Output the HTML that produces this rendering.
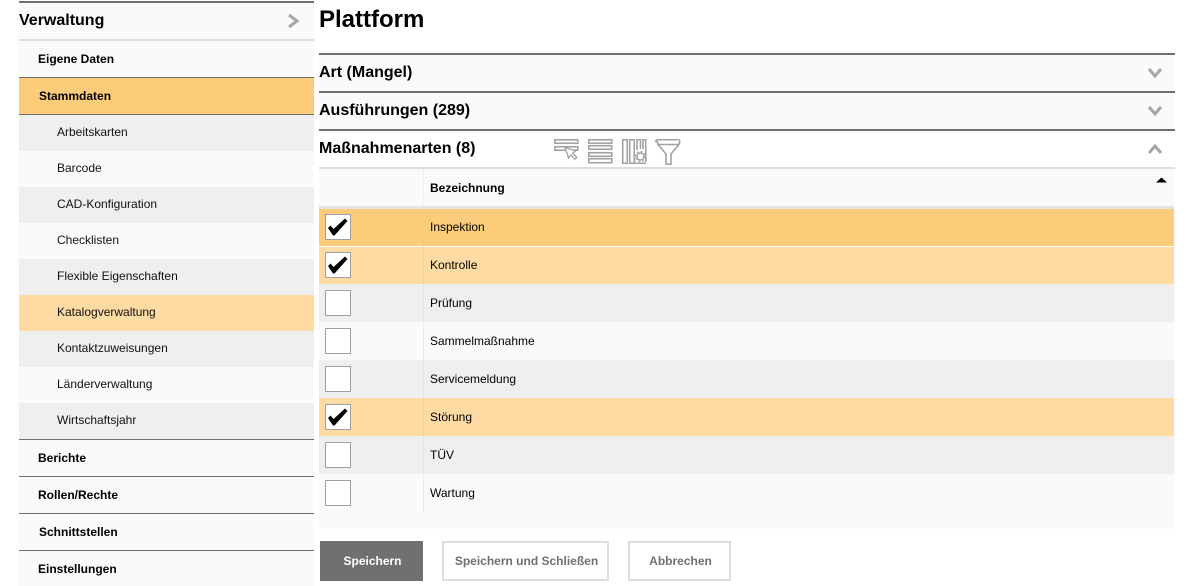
<!DOCTYPE html>
<html><head><meta charset="utf-8">
<style>
html,body{margin:0;padding:0;background:#fff;width:1195px;height:586px;overflow:hidden}
body{font-family:"Liberation Sans",sans-serif;color:#000;position:relative}
.a{position:absolute;white-space:nowrap}
.s{left:19px;width:295px}
.t{line-height:36px;height:36px;font-size:12px}
.u{line-height:34px;color:#111}
.b{font-weight:bold}
.g{background:#efefef}.w{background:#fafafa}
.r{left:319px;width:855px;height:37px}
.r span{position:absolute;left:111px;top:0;line-height:36px;font-size:12px}
.r i{position:absolute;left:104px;top:0;bottom:-1px;width:1px;background:rgba(200,200,200,.3)}
.x{box-shadow:0 -1px 0 var(--c)}
.c{position:absolute;left:6px;top:5px;width:24px;height:24px;border:1px solid #a0a0a0;background:#fff}
.c svg{position:absolute;left:0;top:0}
.btn{top:541px;height:40px;box-sizing:border-box;text-align:center;font-size:12px;font-weight:bold;line-height:40px;padding-left:2px}
</style></head><body>
<!-- sidebar -->
<div class="a s w" style="top:1px;height:38px;border-top:2px solid #707070;box-sizing:border-box"></div>
<div class="a" style="left:19px;top:3px;line-height:36px;font-size:16px;font-weight:bold">Verwaltung</div>
<svg class="a" style="left:287px;top:13px" width="13" height="16" viewBox="0 0 13 16"><path d="M2 2l8 6-8 6" fill="none" stroke="#a5a5a5" stroke-width="3"/></svg>
<div class="a s" style="top:39px;height:2px;background:#ddd"></div>
<div class="a s w t b" style="top:41px;text-indent:19px">Eigene Daten</div>
<div class="a s" style="top:77px;height:1px;background:#707070"></div>
<div class="a s t b" style="top:78px;background:#fdcc7a;text-indent:20px">Stammdaten</div>
<div class="a s" style="top:114px;height:1px;background:#707070"></div>
<div class="a s g t u" style="top:115px;text-indent:38px">Arbeitskarten</div>
<div class="a s w t u" style="top:151px;text-indent:38px">Barcode</div>
<div class="a s g t u" style="top:187px;text-indent:38px">CAD-Konfiguration</div>
<div class="a s w t u" style="top:223px;text-indent:38px">Checklisten</div>
<div class="a s g t u" style="top:259px;text-indent:38px">Flexible Eigenschaften</div>
<div class="a s t u" style="top:295px;text-indent:38px;background:#fddba3">Katalogverwaltung</div>
<div class="a s g t u" style="top:331px;text-indent:38px">Kontaktzuweisungen</div>
<div class="a s w t u" style="top:367px;text-indent:38px">Länderverwaltung</div>
<div class="a s g t u" style="top:403px;text-indent:38px">Wirtschaftsjahr</div>
<div class="a s" style="top:439px;height:1px;background:#707070"></div>
<div class="a s w t b" style="top:440px;text-indent:19px">Berichte</div>
<div class="a s" style="top:476px;height:1px;background:#707070"></div>
<div class="a s w t b" style="top:477px;text-indent:19px">Rollen/Rechte</div>
<div class="a s" style="top:513px;height:1px;background:#707070"></div>
<div class="a s w t b" style="top:514px;text-indent:20px">Schnittstellen</div>
<div class="a s" style="top:550px;height:1px;background:#707070"></div>
<div class="a s w t b" style="top:551px;height:35px;text-indent:19px">Einstellungen</div>

<!-- main -->
<div class="a" style="left:319px;top:5px;font-size:24px;line-height:30px;font-weight:bold">Plattform</div>

<div class="a w" style="left:319px;top:53px;width:856px;height:38px;border-top:2px solid #707070;box-sizing:border-box"></div>
<div class="a" style="left:319px;top:55px;line-height:36px;font-size:16px;font-weight:bold">Art (Mangel)</div>
<svg class="a" style="left:1147px;top:67px" width="16" height="12" viewBox="0 0 16 12"><path d="M2 2l6 7 6-7" fill="none" stroke="#a5a5a5" stroke-width="3"/></svg>

<div class="a w" style="left:319px;top:91px;width:856px;height:38px;border-top:2px solid #707070;box-sizing:border-box"></div>
<div class="a" style="left:319px;top:93px;line-height:36px;font-size:16px;font-weight:bold">Ausführungen (289)</div>
<svg class="a" style="left:1147px;top:105px" width="16" height="12" viewBox="0 0 16 12"><path d="M2 2l6 7 6-7" fill="none" stroke="#a5a5a5" stroke-width="3"/></svg>

<div class="a" style="left:319px;top:129px;width:856px;height:2px;background:#707070"></div>
<div class="a" style="left:319px;top:131px;line-height:36px;font-size:16px;font-weight:bold">Maßnahmenarten (8)</div>
<svg class="a" style="left:1147px;top:143px" width="16" height="12" viewBox="0 0 16 12"><path d="M2 10l6-7 6 7" fill="none" stroke="#a5a5a5" stroke-width="3"/></svg>

<!-- toolbar icons -->
<svg class="a" style="left:550px;top:134px" width="134" height="34" viewBox="550 134 134 34" fill="none" stroke="#a2a2a2" stroke-width="1.600">
<rect x="554.750" y="139.750" width="23" height="3.500"/><rect x="554.750" y="146.750" width="23" height="3.500"/>
<path d="M565 147.500l3.500 10.500 2.300-3 4.200 4.200 1.800-1.800-4.200-4.200 3-2.300z" fill="#fff" stroke-width="1.300"/>
<rect x="588.750" y="139.750" width="23" height="3.500"/><rect x="588.750" y="145.750" width="23" height="3.500"/><rect x="588.750" y="152.750" width="23" height="3.500"/><rect x="588.750" y="158.750" width="23" height="4"/>
<rect x="622.750" y="139.750" width="4.500" height="23.500"/><rect x="629.750" y="139.750" width="4.500" height="23.500"/>
<path d="M637 150v-10.250h3.500v9M643 149v-9.250h2.750v22.500"/>
<path d="M634.500 163.250h11.250"/>
<circle cx="640.500" cy="156.500" r="3.500" fill="#fff" stroke-width="1.500"/>
<circle cx="640.500" cy="156.500" r="5" stroke-width="1.300" stroke-dasharray="2 1.930"/>
<path d="M655.750 141.500c0-1 1-1.750 2-1.750h20c1 0 2 .75 2 1.750 0 1.500-.5 2.500-1.250 3.500l-7.500 9v10.250h-5V154l-7.500-9c-.75-1-1.250-2-1.250-3.500z" stroke-linejoin="round"/>
<path d="M657 144.500h21.500"/>
</svg>

<!-- table -->
<div class="a" style="left:319px;top:167px;width:856px;height:2px;background:#ddd"></div>
<div class="a w" style="left:319px;top:169px;width:855px;height:37px"></div>
<div class="a" style="left:423px;top:169px;width:1px;height:37px;background:#f0f0f0"></div>
<div class="a" style="left:430px;top:170px;line-height:37px;font-size:12px;font-weight:bold">Bezeichnung</div>
<svg class="a" style="left:1156px;top:177px" width="12" height="6"><path d="M0 5.500L5.500 0.500 11 5.500z" fill="#000"/></svg>
<div class="a" style="left:319px;top:206px;width:855px;height:3px;background:#e4e4e4"></div>
<div class="a w" style="left:319px;top:209px;width:856px;height:320px"></div>

<div class="a r" style="top:209px;background:#fdcc7a"><i></i><span>Inspektion</span><div class="c"><svg width="24" height="24" viewBox="0 0 24 24"><path d="M2 13l2.500-2.500 3 3.500L19 3.500l2.500 2.500L8.500 20.500h-1.500z" fill="#000"/></svg></div></div>
<div class="a r" style="top:247px;background:#fddba3"><i></i><span>Kontrolle</span><div class="c"><svg width="24" height="24" viewBox="0 0 24 24"><path d="M2 13l2.500-2.500 3 3.500L19 3.500l2.500 2.500L8.500 20.500h-1.500z" fill="#000"/></svg></div></div>
<div class="a r g x" style="top:285px;--c:#efefef"><i></i><span>Prüfung</span><div class="c"></div></div>
<div class="a r w x" style="top:323px;--c:#fafafa"><i></i><span>Sammelmaßnahme</span><div class="c"></div></div>
<div class="a r g x" style="top:361px;--c:#efefef"><i></i><span>Servicemeldung</span><div class="c"></div></div>
<div class="a r x" style="top:399px;background:#fddba3;--c:#fddba3"><i></i><span>Störung</span><div class="c"><svg width="24" height="24" viewBox="0 0 24 24"><path d="M2 13l2.500-2.500 3 3.500L19 3.500l2.500 2.500L8.500 20.500h-1.500z" fill="#000"/></svg></div></div>
<div class="a r g x" style="top:437px;--c:#efefef"><i></i><span>TÜV</span><div class="c"></div></div>
<div class="a r w x" style="top:475px;--c:#fafafa"><i></i><span>Wartung</span><div class="c"></div></div>

<!-- buttons -->
<div class="a btn" style="left:320px;width:103px;background:#707070;color:#fff">Speichern</div>
<div class="a btn" style="left:442px;width:167px;border:2px solid #ddd;color:#707070;line-height:36px">Speichern und Schließen</div>
<div class="a btn" style="left:628px;width:103px;border:2px solid #ddd;color:#707070;line-height:36px">Abbrechen</div>
</body></html>
